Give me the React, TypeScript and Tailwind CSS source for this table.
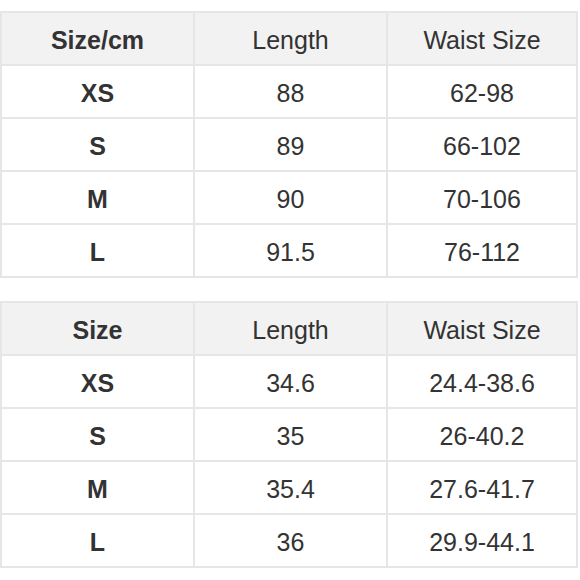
const tables = [
  {
    head: ["Size/cm", "Length", "Waist Size"],
    rows: [
      ["XS", "88", "62-98"],
      ["S", "89", "66-102"],
      ["M", "90", "70-106"],
      ["L", "91.5", "76-112"],
    ],
  },
  {
    head: ["Size", "Length", "Waist Size"],
    rows: [
      ["XS", "34.6", "24.4-38.6"],
      ["S", "35", "26-40.2"],
      ["M", "35.4", "27.6-41.7"],
      ["L", "36", "29.9-44.1"],
    ],
  },
];

function SizeTable({ head, rows }: { head: string[]; rows: string[][] }) {
  return (
    <table className="w-[578px] border-collapse table-fixed text-[#333]">
      <colgroup>
        <col className="w-[193px]" />
        <col className="w-[193px]" />
        <col />
      </colgroup>
      <thead>
        <tr className="h-[53px] bg-[#f2f2f2]">
          {head.map((h, i) => (
            <th
              key={h}
              className={`border-2 border-[#e6e6e6] pt-[4px] text-[25px] ${i === 0 ? "font-bold" : "font-normal"}`}
            >
              {h}
            </th>
          ))}
        </tr>
      </thead>
      <tbody>
        {rows.map((r) => (
          <tr key={r[0]} className="h-[53px] bg-white">
            {r.map((c, i) => (
              <td
                key={i}
                className={`border-2 border-[#e6e6e6] pt-[4px] text-center text-[25px] ${i === 0 ? "font-bold" : ""}`}
              >
                {c}
              </td>
            ))}
          </tr>
        ))}
      </tbody>
    </table>
  );
}

export default function App() {
  return (
    <div className="w-[580px] h-[580px] bg-white flex flex-col gap-[23px] pt-[11px] font-['Liberation_Sans',Arial,sans-serif]">
      {tables.map((t, i) => (
        <SizeTable key={i} head={t.head} rows={t.rows} />
      ))}
    </div>
  );
}
